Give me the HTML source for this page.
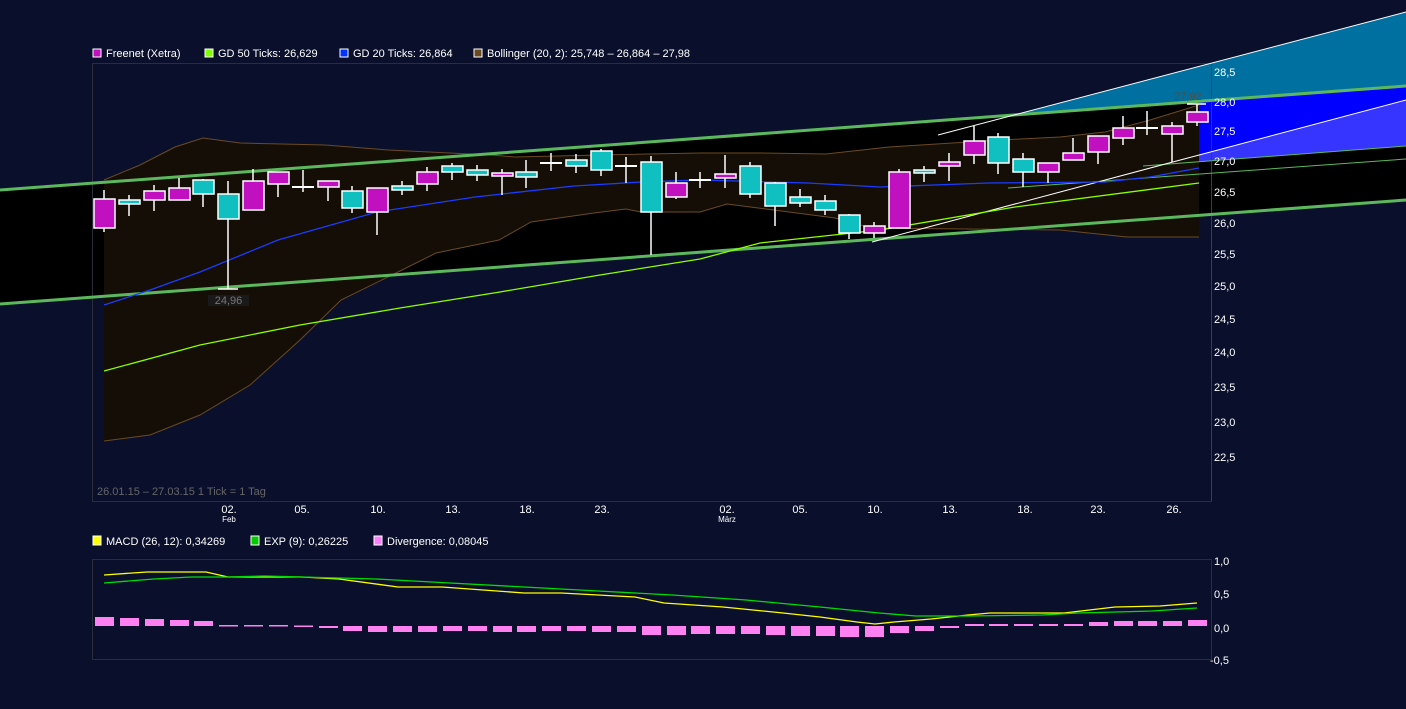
<!DOCTYPE html>
<html><head><meta charset="utf-8"><style>
html,body{margin:0;padding:0;background:#0a102b;}
svg{display:block;font-family:"Liberation Sans",sans-serif;}
</style></head><body>
<svg width="1406" height="709" viewBox="0 0 1406 709" xmlns="http://www.w3.org/2000/svg">
<rect width="1406" height="709" fill="#0a102b"/>
<!-- channel black -->
<polygon points="0,190 1406,86 1406,200 0,304" fill="#000"/>
<!-- teal / blue fills -->
<polygon points="1014,115 1406,12 1406,86" fill="#0070a0"/>
<polygon points="1199,101 1406,86 1406,100 1199,155" fill="#0000ff"/>
<polygon points="1199,155 1406,100 1406,146 1199,162" fill="#3535ff"/>
<!-- bollinger fill -->
<polygon fill="#140e06" points="104,180 140,165 175,147 203,138 240,143 325,145 388,150 491,155 515,157 600,155 700,153 760,153 826,154 889,147 1000,140 1060,137 1105,132 1150,120 1199,105 1199,237 1127,237 1060,230 871,228 835,218 727,204 700,212 641,212 626,209 594,213 531,222 499,240 436,253 396,273 341,300 300,340 250,385 200,415 150,435 104,441"/>
<polyline fill="none" stroke="#6a4a22" stroke-width="1" points="104,180 140,165 175,147 203,138 240,143 325,145 388,150 491,155 515,157 600,155 700,153 760,153 826,154 889,147 1000,140 1060,137 1105,132 1150,120 1199,105"/>
<polyline fill="none" stroke="#6a4a22" stroke-width="1" points="104,441 150,435 200,415 250,385 300,340 341,300 396,273 436,253 499,240 531,222 594,213 626,209 641,212 700,212 727,204 835,218 871,228 1060,230 1127,237 1199,237"/>
<!-- frame -->
<rect x="92.5" y="63.5" width="1119" height="438" fill="none" stroke="#2a2e3a"/>
<line x1="1211.5" y1="63" x2="1211.5" y2="501" stroke="#3a3e4a"/>
<!-- green channel lines -->
<line x1="0" y1="190" x2="1406" y2="86" stroke="#5cb85c" stroke-width="3"/>
<line x1="0" y1="304" x2="1406" y2="200" stroke="#5cb85c" stroke-width="3"/>
<line x1="1143" y1="166" x2="1406" y2="146" stroke="#5cb85c" stroke-width="1"/>
<line x1="1008" y1="188" x2="1406" y2="159" stroke="#5cb85c" stroke-width="1"/>
<!-- white trend lines -->
<line x1="938" y1="135" x2="1406" y2="12" stroke="#fff" stroke-width="1"/>
<line x1="872" y1="242" x2="1406" y2="100" stroke="#fff" stroke-width="1"/>
<!-- GD lines -->
<polyline fill="none" stroke="#1a3cff" stroke-width="1.3" points="104,305 150,290 200,272 278,240 377,212 475,197 574,186 641,182 700,180 808,183 880,187 988,183 1105,182 1150,177 1199,168"/>
<polyline fill="none" stroke="#8cff00" stroke-width="1.3" points="104,371 200,345 300,325 400,308 500,292 600,275 700,259 760,243 880,230 1015,207 1199,183"/>
<!-- candles -->
<g stroke="#fff" stroke-width="1.5">
<line x1="104" y1="190" x2="104" y2="232"/><rect x="94" y="199" width="21" height="29" fill="#c010c0"/>
<line x1="129" y1="195" x2="129" y2="216"/><rect x="119" y="200" width="21" height="4" fill="#10c0c0"/>
<line x1="154" y1="185" x2="154" y2="211"/><rect x="144" y="191" width="21" height="9" fill="#c010c0"/>
<line x1="179" y1="178" x2="179" y2="200"/><rect x="169" y="188" width="21" height="12" fill="#c010c0"/>
<line x1="203" y1="179" x2="203" y2="207"/><rect x="193" y="180" width="21" height="14" fill="#10c0c0"/>
<line x1="228" y1="181" x2="228" y2="289"/><rect x="218" y="194" width="21" height="25" fill="#10c0c0"/>
<line x1="253" y1="169" x2="253" y2="210"/><rect x="243" y="181" width="21" height="29" fill="#c010c0"/>
<line x1="278" y1="172" x2="278" y2="197"/><rect x="268" y="172" width="21" height="12" fill="#c010c0"/>
<line x1="303" y1="170" x2="303" y2="192"/><line x1="292" y1="187" x2="314" y2="187" stroke-width="2"/>
<line x1="328" y1="181" x2="328" y2="201"/><rect x="318" y="181" width="21" height="6" fill="#c010c0"/>
<line x1="352" y1="186" x2="352" y2="213"/><rect x="342" y="191" width="21" height="17" fill="#10c0c0"/>
<line x1="377" y1="188" x2="377" y2="235"/><rect x="367" y="188" width="21" height="24" fill="#c010c0"/>
<line x1="402" y1="181" x2="402" y2="195"/><rect x="392" y="186" width="21" height="4" fill="#10c0c0"/>
<line x1="427" y1="167" x2="427" y2="191"/><rect x="417" y="172" width="21" height="12" fill="#c010c0"/>
<line x1="452" y1="163" x2="452" y2="180"/><rect x="442" y="166" width="21" height="6" fill="#10c0c0"/>
<line x1="477" y1="165" x2="477" y2="181"/><rect x="467" y="170" width="21" height="5" fill="#10c0c0"/>
<line x1="502" y1="169" x2="502" y2="195"/><rect x="492" y="173" width="21" height="3" fill="#c010c0"/>
<line x1="526" y1="160" x2="526" y2="188"/><rect x="516" y="172" width="21" height="5" fill="#10c0c0"/>
<line x1="551" y1="153" x2="551" y2="171"/><line x1="540" y1="163" x2="562" y2="163" stroke-width="2"/>
<line x1="576" y1="154" x2="576" y2="173"/><rect x="566" y="160" width="21" height="6" fill="#10c0c0"/>
<line x1="601" y1="149" x2="601" y2="176"/><rect x="591" y="151" width="21" height="19" fill="#10c0c0"/>
<line x1="626" y1="157" x2="626" y2="183"/><line x1="615" y1="166" x2="637" y2="166" stroke-width="2"/>
<line x1="651" y1="156" x2="651" y2="255"/><rect x="641" y="162" width="21" height="50" fill="#10c0c0"/>
<line x1="676" y1="172" x2="676" y2="199"/><rect x="666" y="183" width="21" height="14" fill="#c010c0"/>
<line x1="700" y1="172" x2="700" y2="188"/><line x1="689" y1="180" x2="711" y2="180" stroke-width="2"/>
<line x1="725" y1="155" x2="725" y2="188"/><rect x="715" y="174" width="21" height="4" fill="#c010c0"/>
<line x1="750" y1="162" x2="750" y2="198"/><rect x="740" y="166" width="21" height="28" fill="#10c0c0"/>
<line x1="775" y1="182" x2="775" y2="226"/><rect x="765" y="183" width="21" height="23" fill="#10c0c0"/>
<line x1="800" y1="189" x2="800" y2="207"/><rect x="790" y="197" width="21" height="6" fill="#10c0c0"/>
<line x1="825" y1="195" x2="825" y2="215"/><rect x="815" y="201" width="21" height="9" fill="#10c0c0"/>
<line x1="849" y1="214" x2="849" y2="239"/><rect x="839" y="215" width="21" height="18" fill="#10c0c0"/>
<line x1="874" y1="222" x2="874" y2="238"/><rect x="864" y="226" width="21" height="7" fill="#c010c0"/>
<line x1="899" y1="169" x2="899" y2="228"/><rect x="889" y="172" width="21" height="56" fill="#c010c0"/>
<line x1="924" y1="166" x2="924" y2="182"/><rect x="914" y="170" width="21" height="3" fill="#10c0c0"/>
<line x1="949" y1="153" x2="949" y2="181"/><rect x="939" y="162" width="21" height="4" fill="#c010c0"/>
<line x1="974" y1="126" x2="974" y2="164"/><rect x="964" y="141" width="21" height="14" fill="#c010c0"/>
<line x1="998" y1="133" x2="998" y2="174"/><rect x="988" y="137" width="21" height="26" fill="#10c0c0"/>
<line x1="1023" y1="153" x2="1023" y2="187"/><rect x="1013" y="159" width="21" height="13" fill="#10c0c0"/>
<line x1="1048" y1="163" x2="1048" y2="183"/><rect x="1038" y="163" width="21" height="9" fill="#c010c0"/>
<line x1="1073" y1="138" x2="1073" y2="160"/><rect x="1063" y="153" width="21" height="7" fill="#c010c0"/>
<line x1="1098" y1="136" x2="1098" y2="164"/><rect x="1088" y="136" width="21" height="16" fill="#c010c0"/>
<line x1="1123" y1="116" x2="1123" y2="145"/><rect x="1113" y="128" width="21" height="10" fill="#c010c0"/>
<line x1="1147" y1="111" x2="1147" y2="135"/><line x1="1136" y1="128" x2="1158" y2="128" stroke-width="2"/>
<line x1="1172" y1="122" x2="1172" y2="162"/><rect x="1162" y="126" width="21" height="8" fill="#c010c0"/>
<line x1="1197" y1="104" x2="1197" y2="126"/><rect x="1187" y="112" width="21" height="10" fill="#c010c0"/>
<line x1="1187" y1="104" x2="1206" y2="104"/>
<line x1="218" y1="289" x2="238" y2="289"/>
</g>
<rect x="208" y="295" width="41" height="11" fill="#1a1a1a"/>
<text x="228.5" y="304" font-size="11" fill="#777" text-anchor="middle">24,96</text>
<text x="1174" y="100" font-size="11" fill="#5a4a3a">27,92</text>
<!-- legend -->
<g font-size="11" fill="#fff">
<rect x="93" y="49" width="8" height="8" fill="#c010c0" stroke="#fff"/><text x="106" y="57">Freenet (Xetra)</text>
<rect x="205" y="49" width="8" height="8" fill="#80ff00" stroke="#fff"/><text x="218" y="57">GD 50 Ticks: 26,629</text>
<rect x="340" y="49" width="8" height="8" fill="#0033ff" stroke="#fff"/><text x="353" y="57">GD 20 Ticks: 26,864</text>
<rect x="474" y="49" width="8" height="8" fill="#6a4a22" stroke="#fff"/><text x="487" y="57">Bollinger (20, 2): 25,748 – 26,864 – 27,98</text>
</g>
<!-- y axis -->
<g font-size="11" fill="#fff">
<text x="1214" y="76">28,5</text><text x="1214" y="106">28,0</text><text x="1214" y="135">27,5</text><text x="1214" y="165">27,0</text>
<text x="1214" y="196">26,5</text><text x="1214" y="227">26,0</text><text x="1214" y="258">25,5</text><text x="1214" y="290">25,0</text>
<text x="1214" y="323">24,5</text><text x="1214" y="356">24,0</text><text x="1214" y="391">23,5</text><text x="1214" y="426">23,0</text>
<text x="1214" y="461">22,5</text>
</g>
<text x="97" y="495" font-size="11" fill="#666">26.01.15 – 27.03.15   1 Tick = 1 Tag</text>
<!-- x axis -->
<g font-size="11" fill="#fff" text-anchor="middle">
<text x="229" y="513">02.</text><text x="302" y="513">05.</text><text x="378" y="513">10.</text><text x="453" y="513">13.</text>
<text x="527" y="513">18.</text><text x="602" y="513">23.</text><text x="727" y="513">02.</text><text x="800" y="513">05.</text>
<text x="875" y="513">10.</text><text x="950" y="513">13.</text><text x="1025" y="513">18.</text><text x="1098" y="513">23.</text>
<text x="1174" y="513">26.</text>
</g>
<g font-size="8" fill="#fff" text-anchor="middle"><text x="229" y="522">Feb</text><text x="727" y="522">März</text></g>
<!-- MACD legend -->
<g font-size="11" fill="#fff">
<rect x="93" y="536" width="8" height="9" fill="#ffff00" stroke="#fff"/><text x="106" y="545">MACD (26, 12): 0,34269</text>
<rect x="251" y="536" width="8" height="9" fill="#00cc00" stroke="#fff"/><text x="264" y="545">EXP (9): 0,26225</text>
<rect x="374" y="536" width="8" height="9" fill="#ff80ff" stroke="#fff"/><text x="387" y="545">Divergence: 0,08045</text>
</g>
<rect x="92.5" y="559.5" width="1119" height="100" fill="none" stroke="#2a2e3a"/>
<g font-size="11" fill="#fff"><text x="1214" y="565">1,0</text><text x="1214" y="598">0,5</text><text x="1214" y="632">0,0</text><text x="1210" y="664">-0,5</text></g>
<!-- histogram -->
<g fill="#ff80f0">
<rect x="95" y="617" width="19" height="9"/><rect x="120" y="618" width="19" height="8"/><rect x="145" y="619" width="19" height="7"/><rect x="170" y="620" width="19" height="6"/><rect x="194" y="621" width="19" height="5"/>
<rect x="219" y="625" width="19" height="1.5"/><rect x="244" y="625" width="19" height="1.5"/><rect x="269" y="625" width="19" height="1.5"/><rect x="294" y="625.5" width="19" height="1.5"/>
<rect x="319" y="626" width="19" height="2"/><rect x="343" y="626" width="19" height="5"/><rect x="368" y="626" width="19" height="6"/><rect x="393" y="626" width="19" height="6"/><rect x="418" y="626" width="19" height="6"/>
<rect x="443" y="626" width="19" height="5"/><rect x="468" y="626" width="19" height="5"/><rect x="493" y="626" width="19" height="6"/><rect x="517" y="626" width="19" height="6"/><rect x="542" y="626" width="19" height="5"/>
<rect x="567" y="626" width="19" height="5"/><rect x="592" y="626" width="19" height="6"/><rect x="617" y="626" width="19" height="6"/><rect x="642" y="626" width="19" height="9"/><rect x="667" y="626" width="19" height="9"/>
<rect x="691" y="626" width="19" height="8"/><rect x="716" y="626" width="19" height="8"/><rect x="741" y="626" width="19" height="8"/><rect x="766" y="626" width="19" height="9"/><rect x="791" y="626" width="19" height="10"/>
<rect x="816" y="626" width="19" height="10"/><rect x="840" y="626" width="19" height="11"/><rect x="865" y="626" width="19" height="11"/><rect x="890" y="626" width="19" height="7"/><rect x="915" y="626" width="19" height="5"/>
<rect x="940" y="626" width="19" height="2"/><rect x="965" y="624" width="19" height="2"/><rect x="989" y="624" width="19" height="2"/><rect x="1014" y="624" width="19" height="2"/><rect x="1039" y="624" width="19" height="2"/>
<rect x="1064" y="624" width="19" height="2"/><rect x="1089" y="622" width="19" height="4"/><rect x="1114" y="621" width="19" height="5"/><rect x="1138" y="621" width="19" height="5"/><rect x="1163" y="621" width="19" height="5"/><rect x="1188" y="620" width="19" height="6"/>
</g>
<polyline fill="none" stroke="#ffff00" stroke-width="1.3" points="104,575 147,572 206,572 228,577 302,577 339,579 398,587 442,587 524,593 561,593 635,597 664,603 723,607 783,613 820,617 857,622 875,624 894,622 931,619 968,615 990,613 1064,613 1115,607 1160,606 1197,603"/>
<polyline fill="none" stroke="#00dd00" stroke-width="1.3" points="104,583 154,579 191,577 228,577 265,576 339,578 376,579 450,583 524,587 598,591 672,595 746,600 820,607 879,613 916,616 968,616 1042,615 1078,613 1152,611 1197,608"/>
</svg>
</body></html>
